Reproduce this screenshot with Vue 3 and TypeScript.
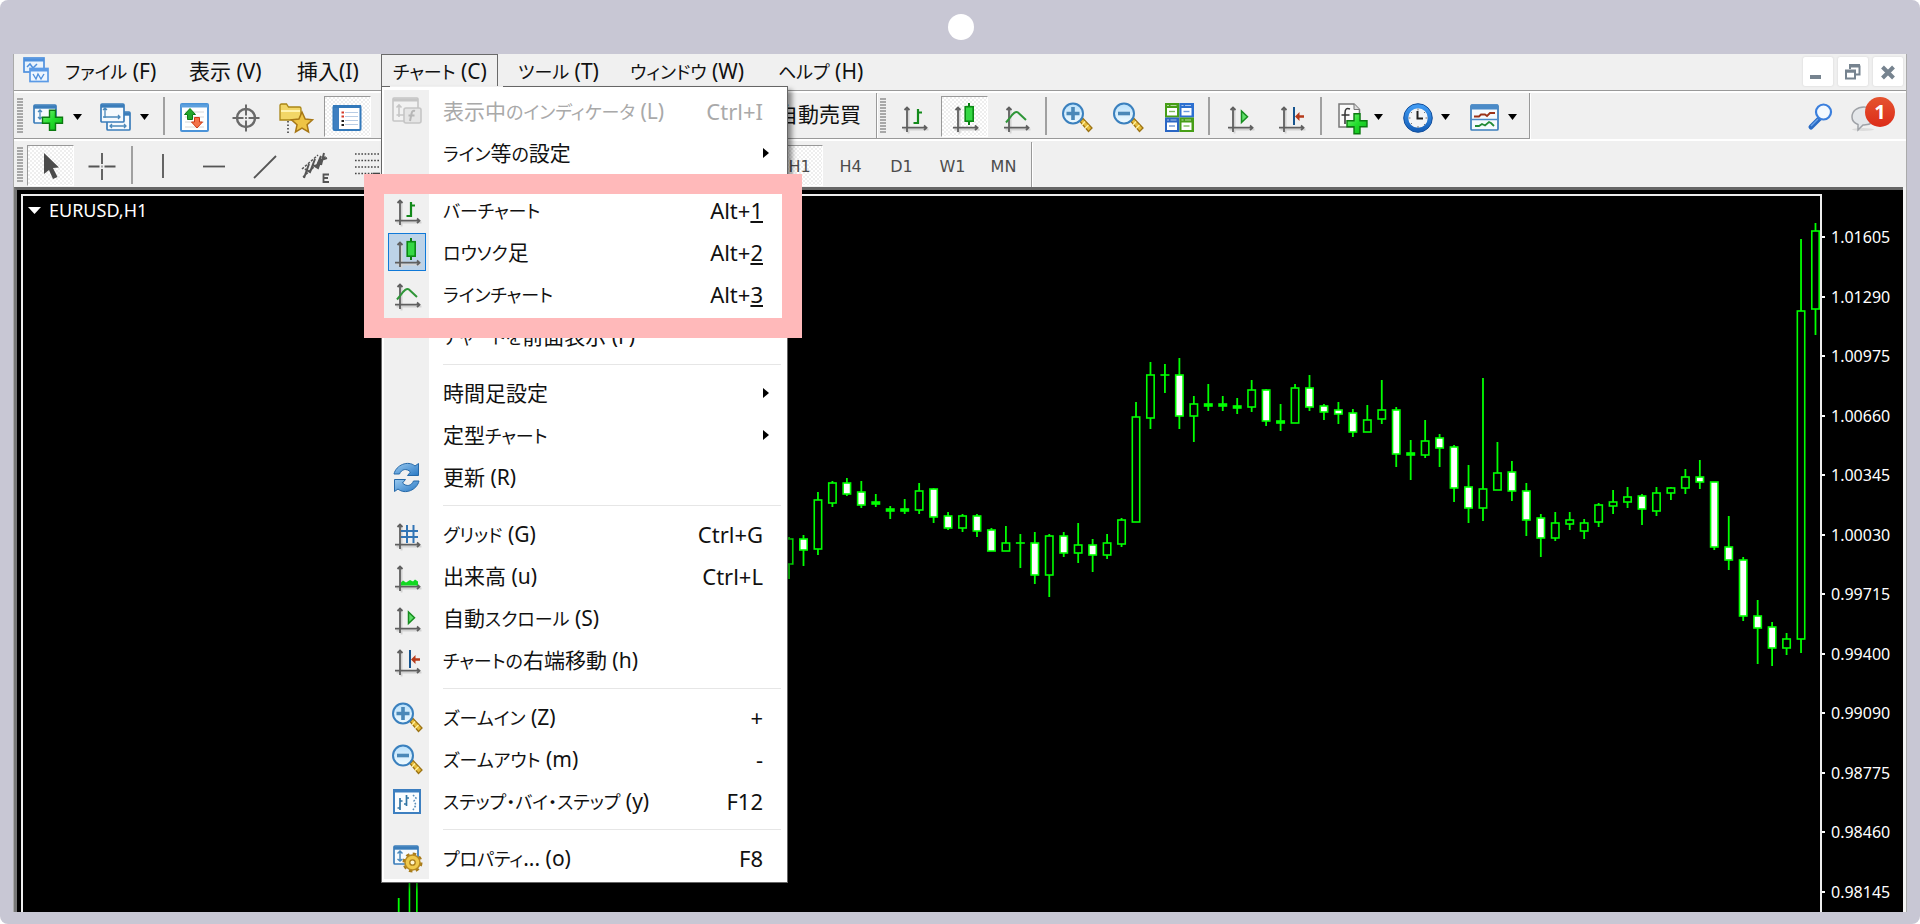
<script setup lang="ts">
import { h } from 'vue'

interface MenuEntry {
  label?: string
  icon?: string
  key?: string
  accessKey?: string
  submenu?: boolean
  disabled?: boolean
  selected?: boolean
  separator?: boolean
}
interface Tool {
  name: string
  icon?: string
  kind?: 'combo' | 'sep' | 'pressed'
}
type Shape = 'hollow' | 'filled' | 'dash'
type Candle = [index: number, high: number, top: number, bottom: number, low: number, shape: Shape]

const KANA = /([\u3041-\u30ff]+)/
const JpText = (props: { text: string }) =>
  h('span', props.text.split(KANA).filter(Boolean).map((run) =>
    h('span', { class: KANA.test(run) ? 'kana' : 'plain' }, run)))
JpText.props = ['text']

const axis =
  '<g stroke="#d2d2d2" stroke-width="2" transform="translate(1.5 1.5)"><path d="M9 7V31M4 27H29"/></g>' +
  '<g stroke="#5f5f5f" stroke-width="1.8" fill="none"><path d="M9 6.500V31M4 26.700H28"/><path d="M6.500 9 9 6.500 11.500 9M26 24.500 28.500 26.700 26 29"/></g>'
const plus = (x: number, y: number) =>
  `<path transform="translate(${x} ${y})" d="M7.500.7h6v7h7v6h-7v7h-6v-7h-7v-6h7z" fill="url(#plusFill)" stroke="#0b7a10" stroke-width="1.400"/>`
const lens = (mark: string) =>
  '<path d="M19 20.500l3-3 9 9.500-3.500 3.500z" fill="#e8bd3a" stroke="#9c7315" stroke-width="1.300"/><path d="M24 20.500l-3 3.500M27.500 24l-3.500 3.500" stroke="#fff1a0" stroke-width="1.300"/>' +
  '<circle cx="12" cy="12.500" r="10" fill="url(#lensFill)" stroke="#3a80be" stroke-width="2"/>' +
  `<path d="${mark}" stroke="#4a88b8" stroke-width="3.600" fill="none"/>`
const win = (x: number, y: number, w: number, hh: number) =>
  `<rect x="${x + 1}" y="${y + 1}" width="${w}" height="${hh}" rx="1" fill="#f6fafd" stroke="#3b7dba" stroke-width="1.700"/><path d="M${x + 1} ${y + 3}h${w}" stroke="#3b7dba" stroke-width="3.400"/>`
const tile = (x: number, y: number, c: string) =>
  `<rect x="${x}" y="${y}" width="14.500" height="14.500" fill="${c}"/><path d="M${x + 2} ${y + 2.500}h2M${x + 5.500} ${y + 2.500}h6" stroke="#fff" stroke-opacity=".6" stroke-width="1.200"/><rect x="${x + 2}" y="${y + 5}" width="10" height="7.500" fill="#fff"/><path d="M${x + 4} ${y + 8.500}h6" stroke="${c}" stroke-opacity=".7" stroke-width="1.400"/>`

const icons: Record<string, string> = {
  app: '<rect x="3" y="4" width="20" height="14" fill="#e9f3fd" stroke="#4f90dd" stroke-width="1.700"/><path d="M3 6h20" stroke="#4f90dd" stroke-width="3"/><path d="M6 13l3-3 3 4 4-4" stroke="#4f90dd" stroke-width="1.500" fill="none"/><rect x="9" y="14.500" width="18" height="13" fill="#eef6ff" stroke="#5b9ae6" stroke-width="1.700"/><path d="M9 16h18" stroke="#5b9ae6" stroke-width="3"/><path d="M12 20l3 5 2-5 3 5 3-5" stroke="#4f90dd" stroke-width="1.400" fill="none"/>',
  newChart: win(0, 3, 22, 18) + '<path d="M7 9v9M5 11l2-2 2 2M5 16l2 2 2-2" stroke="#4b89bb" stroke-width="1.300" fill="none"/>' + plus(9, 8.5),
  profiles: win(6, 10, 23, 18) + '<path d="M10 25h16M12 23l-2 2 2 2M24 23l2 2-2 2" stroke="#4b89bb" stroke-width="1.300" fill="none"/>' + win(0, 2, 23, 18) + '<path d="M5 7v10M3 9l2-2 2 2M3 16h17M18 14l2 2-2 2" stroke="#4b89bb" stroke-width="1.300" fill="none"/>',
  market: '<rect x="2" y="3" width="27" height="27" rx="1" fill="#fff" stroke="#4b93d8" stroke-width="2"/><path d="M2 5h27" stroke="#5da0de" stroke-width="3"/><path d="M6 11h19M6 16h19M6 21h19M6 26h19" stroke="#d8d8d8"/><path d="M11 7.500l5.500 6h-3v5h-5v-5h-3z" fill="#23a62b" stroke="#0e7a16"/><path d="M18 27l5.500-6h-3v-4.500h-5V21h-3z" fill="#f4734a" stroke="#d03a14"/>',
  cross: '<g fill="none" stroke="#6a6a6a"><circle cx="16" cy="17" r="9" stroke-width="2.400"/><path d="M16 3.500v11M16 19.500v11M2.500 17h11M18.500 17h11" stroke-width="2"/></g><rect x="15" y="16" width="2" height="2" fill="#777"/>',
  favorites: '<path d="M-1 4.500q0-1.500 1.500-1.500h5l2 3h11q1.500 0 1.500 1.500V19H-1z" fill="#f2d667" stroke="#a98516" stroke-width="1.300"/><path d="M0 10h19" stroke="#fff3b0" stroke-width="2"/><path d="M7 20v12" stroke="#333" stroke-width="1.500" stroke-dasharray="1.500 2"/><path d="M21 11l3.200 7 7.300.8-5.400 5 1.500 7.200-6.600-3.800-6.500 3.800 1.500-7.200-5.500-5 7.400-.8z" fill="#eec445" stroke="#a77716" stroke-width="1.500"/>',
  navigator: '<rect x="1.500" y="5" width="27" height="24" rx="1" fill="#fff" stroke="#3379bb" stroke-width="2"/><path d="M1 5.500h28" stroke="#3379bb" stroke-width="3"/><path d="M4.500 7v21" stroke="#3f7fc0" stroke-width="5"/><path d="M13 11.500h13M13 15.500h13M13 19.500h13M13 23.500h13" stroke="#b8cce4"/><path d="M9.500 10.500h2.500v2H9.500zM9.500 14.500h2.500v2H9.500z" fill="#d43a2a"/><path d="M9.500 19h2.500v2H9.500zM9.500 23h2.500v2H9.500z" fill="#222"/>',
  bars: axis + '<path d="M20 8v15M20 11.500h4M15.500 22H20" stroke="#128a1a" stroke-width="2.200" fill="none"/>',
  candles: axis + '<path d="M20 2v22" stroke="#0a7d12" stroke-width="2"/><rect x="16.200" y="5.700" width="8" height="14.500" fill="#35d844" stroke="#0b8a14" stroke-width="1.600"/>',
  line: axis + '<path d="M6 21.500L9 18q6-9 9-6.500l8 7.500" stroke="#2f9638" stroke-width="2" fill="none"/>',
  zoomIn: lens('M12 6v13M5.500 12.500h13'),
  zoomOut: lens('M6 12.500h12'),
  tiles: tile(2, 2, '#469e17') + tile(16.5, 2, '#2c6fd0') + tile(2, 16.5, '#2a66c4') + tile(16.5, 16.5, '#469e17'),
  scroll: axis + '<path d="M17.500 10v11.500l6-5.700z" fill="#5fe06a" stroke="#178d20" stroke-width="1.500"/>',
  shift: axis + '<path d="M19 6v18" stroke="#16548f" stroke-width="2"/><path d="M20 15.500l4.500-4.500v3.200h4.500v2.600h-4.500V20z" fill="#b53a1a"/>',
  indicators: '<path d="M5 3h15l5.500 5.500V26H5z" fill="#fafafa" stroke="#777" stroke-width="1.500"/><path d="M20 3v5.500h5.500" fill="#ddd" stroke="#777"/><path d="M16 8q-5-2-5 4v11M7.500 14h8" stroke="#333" stroke-width="1.500" fill="none"/>' + plus(12.5, 12),
  periods: '<circle cx="17" cy="17" r="12" fill="#f3f4f6" stroke="url(#clockRing)" stroke-width="4.500"/><circle cx="17" cy="17" r="14.300" fill="none" stroke="#134f9c"/><path d="M16.500 10v7.500H22" stroke="#222" stroke-width="2" fill="none"/><path d="M17 7.500v2M17 25v2M7.500 17h2M24.500 17h2M10 11l1 1M23 23l1 1M23 12l1-1M10 23l1-1" stroke="#777"/>',
  templates: win(2, 3, 27, 25) + '<path d="M3 6h27" stroke="#4b8bc8" stroke-width="5"/><path d="M3 18.500h26" stroke="#4b8bc8" stroke-width="1.500"/><path d="M6 15.500h5l2-2h4l2 1.500 3-3h5" stroke="#9c3318" stroke-width="1.800" fill="none"/><path d="M7 25h4l3-2 3 1.500 4-3.500 2 1 3 3" stroke="#228a35" stroke-width="1.800" fill="none"/>',
  search: '<path d="M15 18l-9 9" stroke="#2a6bc4" stroke-width="5" stroke-linecap="round"/><path d="M13 19l-7 7" stroke="#6aa4ea" stroke-width="1.500"/><circle cx="18.500" cy="12" r="7.500" fill="#f3f9ff" stroke="#3b7fdd" stroke-width="2.200"/>',
  chat: '<ellipse cx="14" cy="29.500" rx="11" ry="1.500" fill="#dcdcdc"/><path d="M15 7c7 0 12 4 12 9s-5 9-12 9h-1L9 30v-5.500C5 23 3 20 3 17c0-6 5-10 12-10z" fill="#e4e7ea" stroke="#9fa2a7" stroke-width="1.500"/>',
  cursor: '<path d="M9 3l15 14.500-6 .5 4.500 9-4.500 2-4-9L9 24z" fill="#4c4c4c"/>',
  crosshair: '<path d="M16 3v11M16 19v11M2.500 16.500h11M18.500 16.500h11M15.500 16.500h1" stroke="#555" stroke-width="1.800"/>',
  vertical: '<path d="M16 4v24" stroke="#555" stroke-width="1.800"/>',
  horizontal: '<path d="M5 16.500h22" stroke="#555" stroke-width="1.800"/>',
  trend: '<path d="M5 28L27 6" stroke="#555" stroke-width="1.800"/>',
  channel: '<g stroke="#555" fill="none"><path d="M2 19L18 5M3 27L26 6" stroke-width="1.500" stroke-dasharray="2.500 1.500"/><path d="M4 28l5-14M10 22l5-13M16 18l5-12M21 15l3-12M5 19l5 3 3-7 5 3 3-8 6-2" stroke-width="2"/><path d="M29 24.500h-5.500v7.500H29M23.500 28H28" stroke-width="1.800"/></g>',
  fibo: '<path d="M4 4h25M4 10.500h25M4 17h25M4 23.500h18" stroke="#444" stroke-width="1.600" stroke-dasharray="1.600 1.600"/><path d="M22 23.500h7" stroke="#444" stroke-width="1.600"/>',
  indicatorList: '<g opacity=".55" fill="#f4f4f4" stroke="#a4a4a4" stroke-width="1.600"><rect x="2" y="3" width="25" height="23" rx="1"/><path d="M2 5h25" stroke-width="3"/><path d="M8 10v12M5.500 12.500L8 10l2.500 2.500M5.500 20h8" fill="none"/><rect x="13" y="13" width="17" height="15" rx="2" fill="#ddd"/><path d="M24 16q-3-1-3.500 3l-1.500 7M17.500 20.500h6" stroke="#888" stroke-width="2" fill="none"/></g>',
  refresh: '<g stroke="#2468a8" stroke-width="1" fill="url(#refreshFill)"><path d="M3 13C5 4 17-1 24 5l3.500-2.500V14.500H16.500l3-3.500c-4-4-9-3-11 2z"/><path d="M28 20c-2 9-14 14-21 8l-3.500 2.500V18.500H14.500l-3 3.500c4 4 9 3 11-2z"/></g>',
  grid: axis + '<path d="M16 7v18M22.500 7v18M10 13h17M10 19h17" stroke="#3275b5" stroke-width="2"/>',
  volume: axis + '<path d="M10 25.500v-3l2-2 3 2 4-2.500 3 1.500 2-2 3 2v4z" fill="#12d822"/>',
  step: '<rect x="3" y="5" width="26" height="23" fill="#fbfdff" stroke="#3d7fc0" stroke-width="2"/><path d="M3 6h26" stroke="#3d7fc0" stroke-width="3"/><path d="M9 13v12M6.500 23H9M9 16h2.500M15.500 10v11M13 19h2.500M15.500 13H18" stroke="#3275a5" stroke-width="1.700"/><path d="M22 10l3 3-2 3 2 4-3 5" stroke="#5b8fb9" stroke-width="1.500" stroke-dasharray="1.800 1.500" fill="none"/>',
  properties: win(2, 3, 24, 18) + '<path d="M9 9v10M6.500 11.500L9 9l2.500 2.500M6.500 17L9 19l2.500-2" stroke="#4b89bb" stroke-width="1.500" fill="none"/><circle cx="21.500" cy="20.500" r="8.500" fill="none" stroke="#a87b1a" stroke-width="3" stroke-dasharray="3.400 3.270"/><circle cx="21.500" cy="20.500" r="7.500" fill="#efc94c" stroke="#b88a20" stroke-width="1.500"/><circle cx="21.500" cy="20.500" r="2.700" fill="#fff6d0" stroke="#a87b1a" stroke-width="1.300"/>',
}

const menuBar: string[] = ['ファイル (F)', '表示 (V)', '挿入(I)', 'チャート (C)', 'ツール (T)', 'ウィンドウ (W)', 'ヘルプ (H)']

const entries: MenuEntry[] = [
  { label: '表示中のインディケータ (L)', icon: 'indicatorList', key: 'Ctrl+I', disabled: true },
  { label: 'ライン等の設定', submenu: true },
  { separator: true },
  { label: 'バーチャート', icon: 'bars', key: 'Alt+', accessKey: '1' },
  { label: 'ロウソク足', icon: 'candles', key: 'Alt+', accessKey: '2', selected: true },
  { label: 'ラインチャート', icon: 'line', key: 'Alt+', accessKey: '3' },
  { label: 'チャートを前面表示 (F)' },
  { separator: true },
  { label: '時間足設定', submenu: true },
  { label: '定型チャート', submenu: true },
  { label: '更新 (R)', icon: 'refresh' },
  { separator: true },
  { label: 'グリッド (G)', icon: 'grid', key: 'Ctrl+G' },
  { label: '出来高 (u)', icon: 'volume', key: 'Ctrl+L' },
  { label: '自動スクロール (S)', icon: 'scroll' },
  { label: 'チャートの右端移動 (h)', icon: 'shift' },
  { separator: true },
  { label: 'ズームイン (Z)', icon: 'zoomIn', key: '+' },
  { label: 'ズームアウト (m)', icon: 'zoomOut', key: '-' },
  { label: 'ステップ・バイ・ステップ (y)', icon: 'step', key: 'F12' },
  { separator: true },
  { label: 'プロパティ... (o)', icon: 'properties', key: 'F8' },
]

const standardTools: Tool[] = [
  { name: '新規チャート', icon: 'newChart', kind: 'combo' },
  { name: '組表示', icon: 'profiles', kind: 'combo' },
  { name: '', kind: 'sep' },
  { name: '気配値表示', icon: 'market' },
  { name: 'データウィンドウ', icon: 'cross' },
  { name: 'お気に入り', icon: 'favorites' },
  { name: 'ナビゲーター', icon: 'navigator', kind: 'pressed' },
]
const chartTools: Tool[] = [
  { name: 'バーチャート', icon: 'bars' },
  { name: 'ロウソク足', icon: 'candles', kind: 'pressed' },
  { name: 'ラインチャート', icon: 'line' },
  { name: '', kind: 'sep' },
  { name: 'ズームイン', icon: 'zoomIn' },
  { name: 'ズームアウト', icon: 'zoomOut' },
  { name: 'ウィンドウの整列', icon: 'tiles' },
  { name: '', kind: 'sep' },
  { name: '自動スクロール', icon: 'scroll' },
  { name: 'チャートの右端移動', icon: 'shift' },
  { name: '', kind: 'sep' },
  { name: 'インディケータ', icon: 'indicators', kind: 'combo' },
  { name: '時間足', icon: 'periods', kind: 'combo' },
  { name: '定型チャート', icon: 'templates', kind: 'combo' },
]
const lineTools: Tool[] = [
  { name: 'カーソル', icon: 'cursor', kind: 'pressed' },
  { name: 'クロスヘア', icon: 'crosshair' },
  { name: '', kind: 'sep' },
  { name: '垂直線', icon: 'vertical' },
  { name: '水平線', icon: 'horizontal' },
  { name: 'トレンドライン', icon: 'trend' },
  { name: 'チャネル', icon: 'channel' },
  { name: 'フィボナッチ', icon: 'fibo' },
]
const periods: string[] = ['H1', 'H4', 'D1', 'W1', 'MN']
const prices: string[] = ['1.01605', '1.01290', '1.00975', '1.00660', '1.00345', '1.00030', '0.99715', '0.99400', '0.99090', '0.98775', '0.98460', '0.98145']

const H: Shape = 'hollow'
const F: Shape = 'filled'
const D: Shape = 'dash'
const candles: Candle[] = [
  [-28, 898, 915, 920, 925, H], [-27, 860, 870, 920, 925, H],
  [-1, 537, 539, 564, 579, H], [0, 535, 539, 550, 566, F], [1, 492, 500, 549, 555, H],
  [2, 481, 483, 503, 507, H], [3, 478, 483, 494, 496, F], [4, 481, 492, 505, 508, F],
  [5, 494, 502, 504, 507, D], [6, 506, 509, 511, 519, D], [7, 499, 509, 511, 514, D],
  [8, 483, 491, 510, 514, H], [9, 488, 489, 517, 523, F], [10, 512, 516, 528, 530, F],
  [11, 514, 516, 528, 532, H], [12, 514, 516, 531, 537, F], [13, 528, 530, 551, 551, F],
  [14, 526, 543, 551, 551, H], [15, 534, 543, 543, 568, D], [16, 532, 543, 575, 584, F],
  [17, 534, 536, 575, 597, H], [18, 532, 536, 553, 557, F], [19, 523, 545, 553, 563, H],
  [20, 539, 545, 555, 572, F], [21, 534, 543, 555, 559, H], [22, 518, 520, 544, 547, H],
  [23, 402, 417, 522, 522, H], [24, 362, 375, 418, 429, H], [25, 364, 375, 375, 393, D],
  [26, 358, 375, 416, 429, F], [27, 396, 404, 416, 442, H], [28, 384, 404, 406, 411, D],
  [29, 396, 404, 406, 411, D], [30, 398, 406, 408, 414, D], [31, 380, 390, 407, 412, H],
  [32, 389, 390, 421, 426, F], [33, 404, 421, 423, 431, D], [34, 384, 388, 423, 423, H],
  [35, 375, 388, 407, 411, F], [36, 404, 406, 412, 420, F], [37, 402, 410, 414, 424, F],
  [38, 409, 413, 432, 437, F], [39, 405, 420, 432, 432, H], [40, 380, 410, 419, 424, H],
  [41, 407, 410, 454, 467, F], [42, 440, 453, 455, 480, D], [43, 420, 441, 455, 458, H],
  [44, 434, 438, 448, 467, F], [45, 445, 447, 488, 502, F], [46, 465, 487, 508, 523, F],
  [47, 378, 489, 508, 521, H], [48, 442, 473, 490, 490, H], [49, 461, 472, 491, 501, F],
  [50, 483, 491, 520, 536, F], [51, 514, 518, 538, 557, F], [52, 512, 523, 538, 541, H],
  [53, 512, 520, 524, 530, H], [54, 519, 523, 531, 539, H], [55, 503, 505, 522, 527, H],
  [56, 490, 502, 506, 514, H], [57, 487, 497, 502, 508, H], [58, 494, 496, 509, 525, F],
  [59, 487, 493, 511, 516, H], [60, 487, 488, 493, 500, H], [61, 469, 477, 488, 494, H],
  [62, 460, 477, 482, 489, F], [63, 482, 482, 547, 550, F], [64, 516, 547, 560, 570, F],
  [65, 557, 560, 616, 621, F], [66, 600, 616, 628, 664, F], [67, 622, 627, 648, 666, F],
  [68, 633, 639, 648, 655, H], [69, 239, 311, 639, 653, H], [70, 223, 231, 309, 335, H],
]
const candleX = (index: number): number => 803.5 + index * 14.457
const candleFill: Record<Shape, string> = { hollow: '#000', filled: '#fff', dash: '#0f0' }
</script>

<template>
  <div class="device" lang="ja">
    <span class="camera" aria-hidden="true"></span>
    <svg class="defs" aria-hidden="true">
      <defs>
        <linearGradient id="plusFill" x1="0" y1="0" x2="1" y2="1"><stop offset="0" stop-color="#7df07a" /><stop offset=".5" stop-color="#22dd2c" /><stop offset="1" stop-color="#12b41c" /></linearGradient>
        <linearGradient id="lensFill" x1="0" y1="0" x2="0" y2="1"><stop offset="0" stop-color="#b9e0fb" /><stop offset="1" stop-color="#f1fbff" /></linearGradient>
        <linearGradient id="clockRing" x1="0" y1="0" x2="0" y2="1"><stop offset="0" stop-color="#3f9af2" /><stop offset="1" stop-color="#1660ba" /></linearGradient>
        <linearGradient id="refreshFill" x1="0" y1="0" x2="1" y2="1"><stop offset="0" stop-color="#9ccbf0" /><stop offset="1" stop-color="#2878c4" /></linearGradient>
      </defs>
    </svg>
    <main class="window">
      <header class="menubar">
        <svg class="icon app-icon" viewBox="0 0 32 32" aria-hidden="true" v-html="icons.app"></svg>
        <nav class="menus">
          <div v-for="(item, i) in menuBar" :key="item" class="menu-slot">
            <button type="button" class="menu-button" :class="{ open: i === 3 }"><JpText :text="item" /></button>
            <div v-if="i === 3" class="dropdown">
              <ul class="entries">
                <li v-for="(entry, n) in entries" :key="n">
                  <hr v-if="entry.separator" class="rule" />
                  <button v-else type="button" class="entry" :disabled="entry.disabled">
                    <span class="entry-icon" :class="{ selected: entry.selected }">
                      <svg v-if="entry.icon" class="icon" viewBox="0 0 32 32" aria-hidden="true" v-html="icons[entry.icon]"></svg>
                    </span>
                    <JpText class="entry-label" :text="entry.label ?? ''" />
                    <span v-if="entry.key" class="entry-key">{{ entry.key }}<u v-if="entry.accessKey">{{ entry.accessKey }}</u></span>
                    <svg v-if="entry.submenu" class="submenu" viewBox="0 0 6 10" aria-hidden="true"><path d="M0 0l6 5-6 5z" /></svg>
                  </button>
                </li>
              </ul>
              <div class="highlight" aria-hidden="true"></div>
            </div>
          </div>
        </nav>
        <div class="controls">
          <button type="button" aria-label="最小化"><svg viewBox="0 0 29 29"><path d="M7 18h11v4H7z" fill="#76838f" /></svg></button>
          <button type="button" aria-label="元に戻す"><svg viewBox="0 0 29 29" fill="none" stroke="#76838f"><path d="M12 12V9.500h9.500v8H18" stroke-width="2" /><path d="M11 8.500h11" stroke-width="3" /><path d="M8 14.500h9v7H8z" stroke-width="2" /><path d="M7 14h11" stroke-width="3" /></svg></button>
          <button type="button" aria-label="閉じる"><svg viewBox="0 0 29 29"><path d="M9.500 10l11 11M20.500 10l-11 11" stroke="#76838f" stroke-width="4" /></svg></button>
        </div>
      </header>

      <section class="toolbar">
        <div class="group standard">
          <span class="grip"></span>
          <template v-for="(tool, i) in standardTools" :key="i">
            <span v-if="tool.kind === 'sep'" class="sep"></span>
            <button v-else type="button" class="tool" :class="tool.kind" :aria-label="tool.name">
              <svg class="icon" viewBox="0 0 32 32" aria-hidden="true" v-html="icons[tool.icon ?? '']"></svg>
              <svg v-if="tool.kind === 'combo'" class="caret" viewBox="0 0 9 6" aria-hidden="true"><path d="M0 0h9L4.500 6z" /></svg>
            </button>
          </template>
          <button type="button" class="auto-trade">自動売買</button>
        </div>
        <div class="group">
          <span class="grip"></span>
          <template v-for="(tool, i) in chartTools" :key="i">
            <span v-if="tool.kind === 'sep'" class="sep"></span>
            <button v-else type="button" class="tool" :class="tool.kind" :aria-label="tool.name">
              <svg class="icon" viewBox="0 0 32 32" aria-hidden="true" v-html="icons[tool.icon ?? '']"></svg>
              <svg v-if="tool.kind === 'combo'" class="caret" viewBox="0 0 9 6" aria-hidden="true"><path d="M0 0h9L4.500 6z" /></svg>
            </button>
          </template>
        </div>
        <div class="extras">
          <button type="button" class="extra" aria-label="検索"><svg class="icon" viewBox="0 0 32 32" aria-hidden="true" v-html="icons.search"></svg></button>
          <button type="button" class="extra" aria-label="通知">
            <svg class="icon" viewBox="0 0 32 32" aria-hidden="true" v-html="icons.chat"></svg>
            <span class="badge">1</span>
          </button>
        </div>
      </section>

      <section class="toolbar second">
        <div class="group lines">
          <span class="grip"></span>
          <template v-for="(tool, i) in lineTools" :key="i">
            <span v-if="tool.kind === 'sep'" class="sep"></span>
            <button v-else type="button" class="tool" :class="tool.kind" :aria-label="tool.name">
              <svg class="icon" viewBox="0 0 32 32" aria-hidden="true" v-html="icons[tool.icon ?? '']"></svg>
            </button>
          </template>
          <div class="periods">
            <button v-for="period in periods" :key="period" type="button" class="period" :class="{ pressed: period === 'H1' }">{{ period }}</button>
          </div>
        </div>
      </section>

      <section class="chart">
        <div class="plot">
          <svg class="candles" viewBox="23 196 1797 716" preserveAspectRatio="xMaxYMin slice" role="img" aria-label="EURUSD,H1">
            <g v-for="c in candles" :key="c[0]" stroke="#0f0" stroke-width="1.600">
              <path :d="`M${candleX(c[0])} ${c[1]}V${c[4]}`" stroke-width="1.800" />
              <rect :x="candleX(c[0]) - 3.7" :y="c[2]" width="7.400" :height="c[3] - c[2]" :fill="candleFill[c[5]]" />
              <path v-if="c[2] === c[3]" :d="`M${candleX(c[0]) - 4.5} ${c[2]}h9`" />
            </g>
          </svg>
          <h1 class="symbol"><svg viewBox="0 0 13 7" aria-hidden="true"><path d="M0 0h13L6.500 7z" /></svg>EURUSD,H1</h1>
        </div>
        <ol class="scale">
          <li v-for="price in prices" :key="price">{{ price }}</li>
        </ol>
      </section>
    </main>
  </div>
</template>

<style>
body {
  margin: 0;
  background: #fff;
}
.kana {
  font-size: 18px;
  font-feature-settings: "palt";
}
</style>

<style scoped>
.device {
  position: relative;
  display: flex;
  box-sizing: border-box;
  min-height: 100vh;
  padding: 54px 13px 12px;
  border-radius: 8px;
  background: #c8c7d4;
  font-family: "Noto Sans", "Noto Sans CJK JP", sans-serif;
  font-size: 21px;
  line-height: 30px;
  color: #111;
}
.camera {
  position: absolute;
  top: 14px;
  left: 50%;
  width: 26px;
  height: 26px;
  margin-left: -12px;
  border-radius: 50%;
  background: #fff;
}
.defs {
  position: absolute;
  width: 0;
  height: 0;
}
button {
  margin: 0;
  padding: 0;
  border: 0;
  background: none;
  color: inherit;
  font: inherit;
}
.icon {
  display: block;
  flex: none;
  width: 32px;
  height: 32px;
  overflow: visible;
}
.window {
  display: flex;
  flex: 1;
  flex-direction: column;
  min-width: 0;
  border-right: 1px solid #aaa;
  border-left: 1px solid #aaa;
  background: #f0f0f0;
}
.menubar {
  display: flex;
  align-items: flex-start;
  height: 36px;
  border-bottom: 1px solid #999;
}
.app-icon {
  margin-left: 7px;
}
.menus {
  display: grid;
  grid-template-columns: 124px 108px 96px 125px 112px 148px 115px;
}
.menu-slot {
  position: relative;
}
.menu-button {
  display: block;
  box-sizing: border-box;
  height: 33px;
  padding: 0 12px;
  line-height: 34px;
  white-space: nowrap;
}
.menu-button.open {
  width: 117px;
  padding: 0 11px;
  border: 1px solid #6a6a6a;
  border-bottom: 0;
  line-height: 32px;
  text-align: left;
}
.dropdown {
  position: absolute;
  z-index: 5;
  top: 32px;
  left: 0;
  box-sizing: border-box;
  width: 407px;
  padding: 3px 2px;
  border: 1px solid #666;
  background: #fff;
  box-shadow: 4px 4px 5px rgba(0, 0, 0, 0.45);
}
.dropdown::before {
  position: absolute;
  top: -1px;
  left: 8px;
  width: 113px;
  height: 1px;
  background: #f0f0f0;
  content: "";
}
.entries {
  margin: 0;
  padding: 0;
  background: linear-gradient(90deg, #f0f0f0 45px, #fff 45px);
  list-style: none;
}
.entry {
  display: flex;
  align-items: center;
  width: 100%;
  height: 42px;
  padding-right: 22px;
  text-align: left;
  white-space: nowrap;
}
.entry:disabled {
  color: #a9a9a9;
}
.entry-icon {
  display: flex;
  align-items: center;
  justify-content: center;
  box-sizing: border-box;
  width: 38px;
  height: 38px;
  margin: 0 17px 0 4px;
}
.entry-icon.selected {
  border: 1px solid #1079d8;
  background: #bdd3e8;
}
.entry-label {
  flex: 1;
}
.entry-key {
  font-size: 22px;
}
.submenu {
  width: 6px;
  height: 10px;
  margin-right: -6px;
}
.rule {
  height: 1px;
  margin: 7px 4px 7px 59px;
  border: 0;
  background: #e6e6e6;
}
.highlight {
  position: absolute;
  top: 87px;
  right: -15px;
  left: -18px;
  box-sizing: border-box;
  height: 164px;
  border: 20px solid #ffb9ba;
}
.controls {
  display: flex;
  gap: 5px;
  margin: 3px 3px 0 auto;
}
.controls button {
  width: 30px;
  height: 29px;
  border-radius: 2px;
  background: #fff;
  box-shadow: 0 0 2px #ccc;
}
.controls svg {
  display: block;
  width: 29px;
  height: 29px;
}
.toolbar {
  display: flex;
  box-sizing: border-box;
  height: 48px;
  border-top: 2px solid #fff;
}
.group {
  display: flex;
  box-sizing: border-box;
  padding-right: 2px;
  border-right: 1px solid #999;
  border-bottom: 1px solid #999;
  box-shadow: 1px 1px 0 #fff;
}
.standard {
  width: 863px;
}
.grip {
  width: 6px;
  height: 35px;
  margin: 5px 2px 0 3px;
  background: repeating-linear-gradient(#a8a8a8 0 2px, #f0f0f0 2px 3px);
}
.sep {
  width: 2px;
  height: 38px;
  margin: 4px 4px 0;
  background: #a0a0a0;
}
.tool {
  display: flex;
  align-items: center;
  justify-content: center;
  box-sizing: border-box;
  width: 47px;
  height: 41px;
  margin: 3px 2px 0;
  border: 1px solid transparent;
}
.tool.combo {
  justify-content: flex-start;
  gap: 8px;
  width: 67px;
  margin: 3px 0 0;
  padding-left: 7px;
}
.pressed {
  border: 1px solid #fff;
  border-top-color: #999;
  border-left-color: #999;
  background: repeating-conic-gradient(#fff 0 25%, #eee 0 50%) 0 0 / 4px 4px;
}
.caret {
  width: 9px;
  height: 6px;
}
.auto-trade {
  margin-left: auto;
  padding: 0 13px 4px 0;
}
.extras {
  display: flex;
  gap: 12px;
  margin: 7px 25px 0 auto;
}
.extra {
  position: relative;
  width: 32px;
  height: 32px;
}
.badge {
  position: absolute;
  top: -3px;
  right: -14px;
  width: 30px;
  height: 30px;
  border-radius: 50%;
  background: linear-gradient(#e5532f, #dc2c19);
  color: #fff;
  font-size: 20px;
  font-weight: 700;
  line-height: 30px;
}
.second {
  padding-top: 1px;
}
.second .group {
  border-bottom: 0;
}
.lines {
  width: 1018px;
}
.periods {
  display: flex;
  margin: 3px 0 0 auto;
}
.period {
  box-sizing: border-box;
  width: 47px;
  height: 41px;
  margin: 0 2px;
  padding-top: 3px;
  border: 1px solid transparent;
  color: #4c4c4c;
  font-family: "DejaVu Sans", sans-serif;
  font-size: 16px;
}
.period.pressed {
  border: 1px solid #fff;
  border-top-color: #999;
}
.chart {
  display: flex;
  flex: 1;
  min-height: 0;
  margin-right: 3px;
  border-top: 3px solid #666;
  border-left: 3px solid #777;
  background: #000;
  box-shadow: 3px 0 0 #f4f4f4;
}
.plot {
  position: relative;
  flex: 1;
  min-width: 0;
  margin: 4px 0 0 4px;
  border: 2px solid #eee;
  border-bottom: 0;
}
.candles {
  position: absolute;
  inset: 0;
  width: 100%;
  height: 100%;
}
.symbol {
  position: relative;
  display: flex;
  align-items: center;
  gap: 8px;
  margin: 0;
  padding-left: 5px;
  color: #fff;
  font-size: 18px;
  font-weight: 400;
  line-height: 28px;
}
.symbol svg {
  width: 13px;
  height: 7px;
  fill: #fff;
}
.scale {
  display: flex;
  flex-direction: column;
  justify-content: space-between;
  box-sizing: border-box;
  width: 81px;
  margin: 0;
  padding: 37px 0 10px;
  color: #fff;
  font-size: 16px;
  line-height: 20px;
  list-style: none;
}
.scale li {
  display: flex;
  align-items: center;
  gap: 6px;
}
.scale li::before {
  width: 3px;
  height: 2px;
  background: #fff;
  content: "";
}
</style>
